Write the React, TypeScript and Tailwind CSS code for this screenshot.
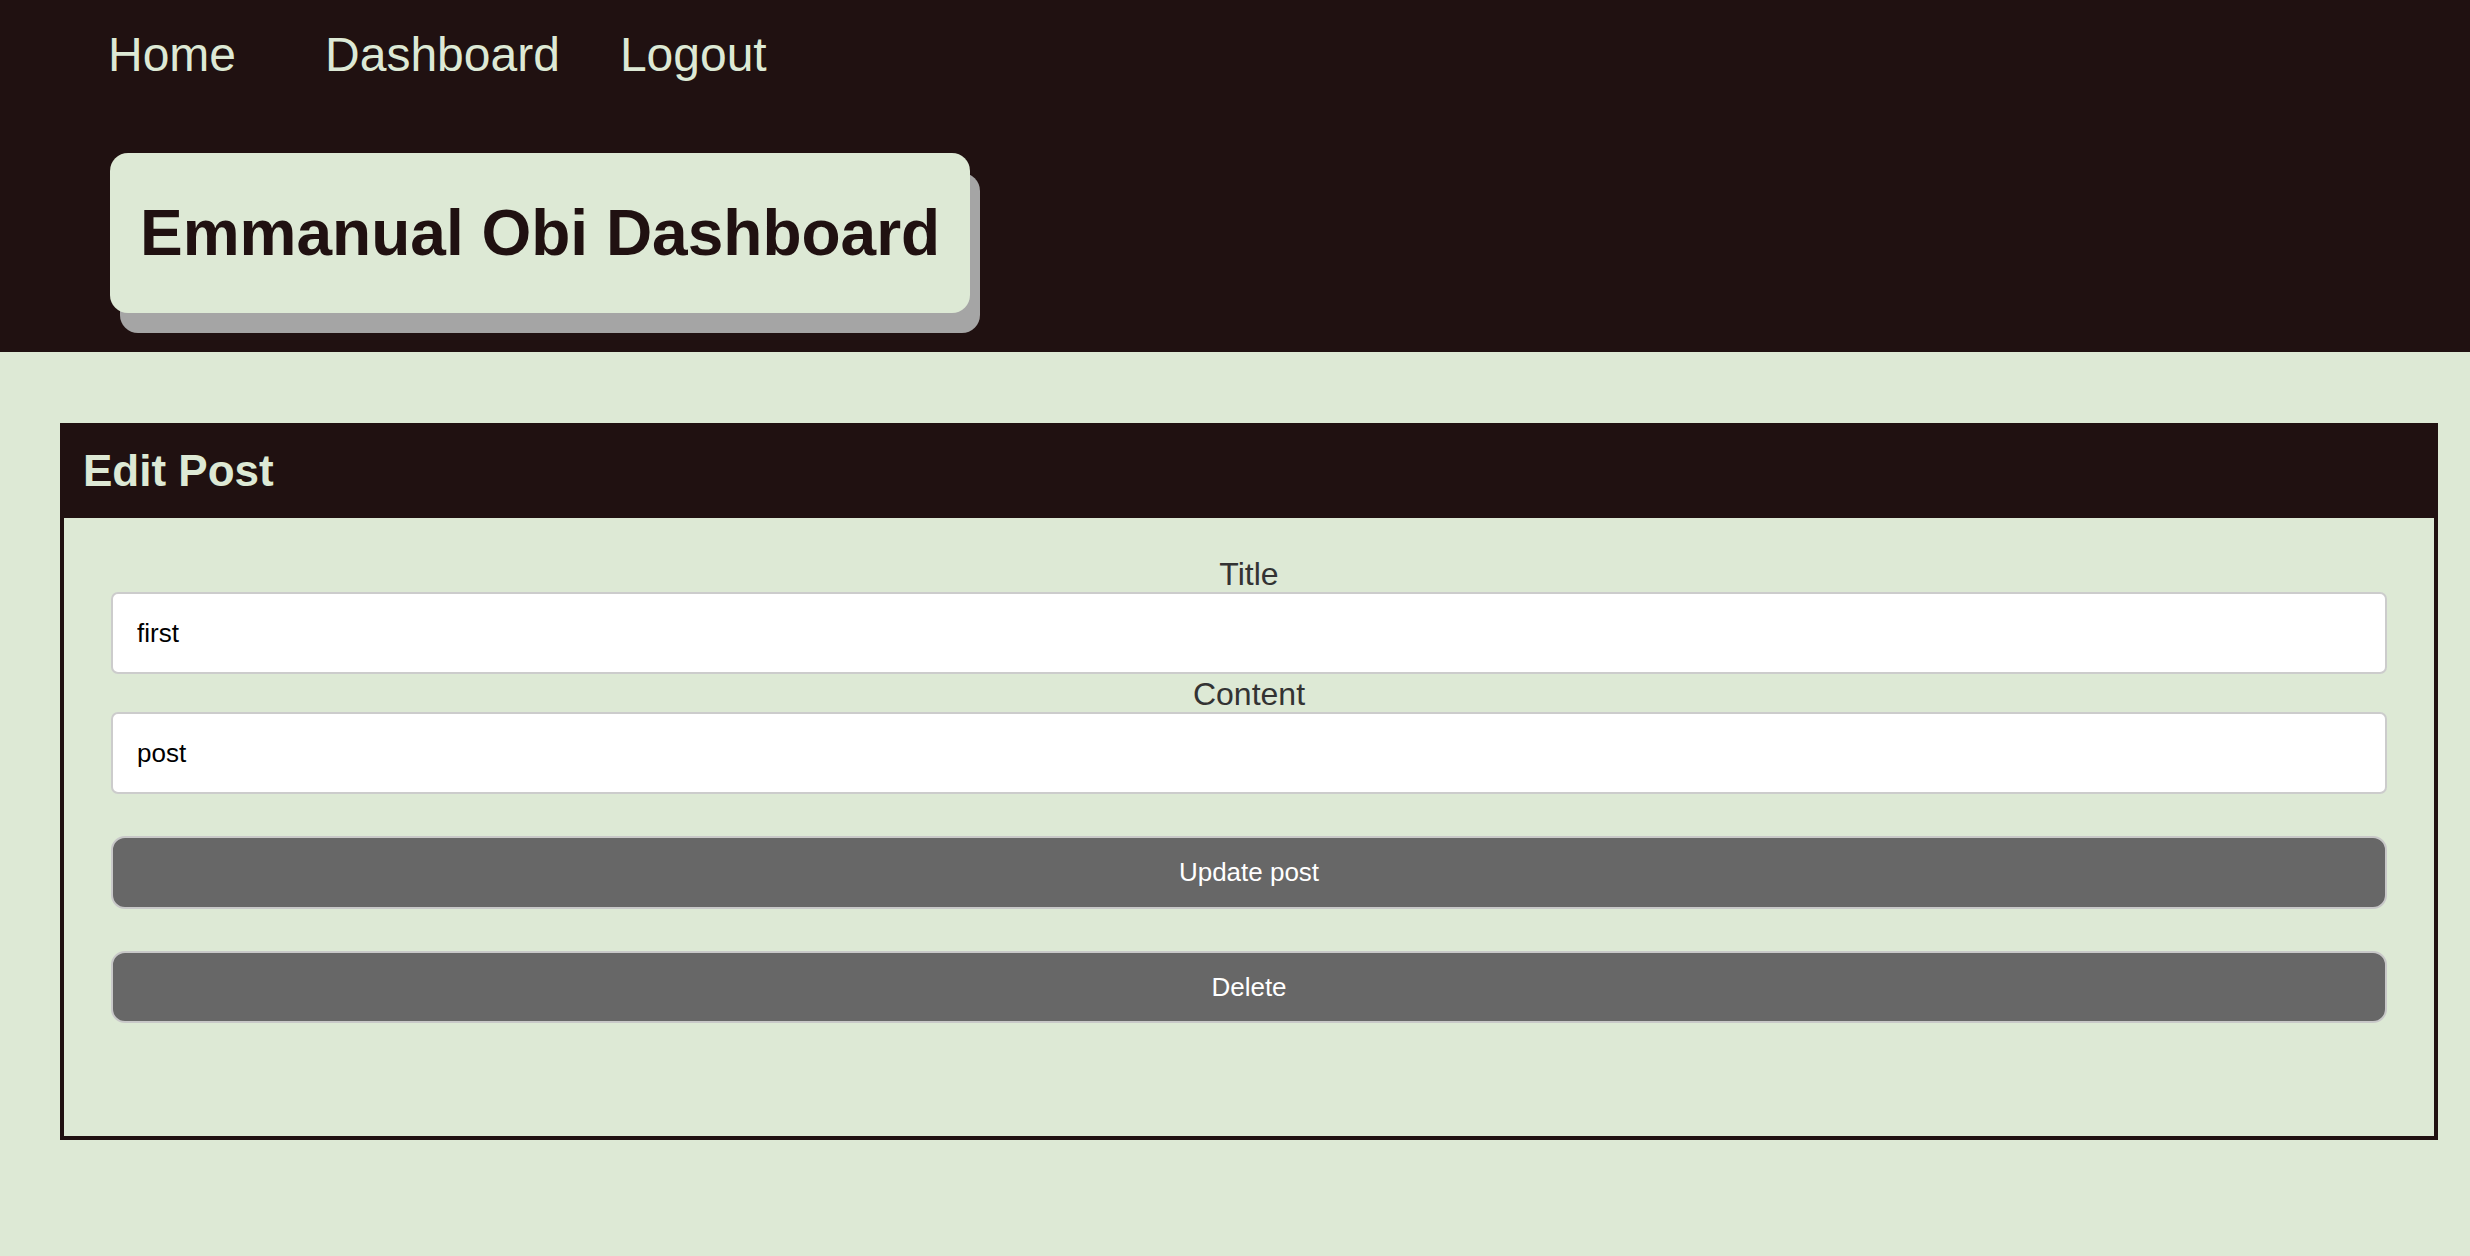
export default function App() {
  return (
    <div className="min-h-screen bg-[#dde9d5] font-['Liberation_Sans',Arial,sans-serif]">
      <header className="h-[352px] bg-[#201111] px-[108px]">
        <nav className="flex pt-[27px] text-[48px] leading-[55px] text-[#dde9d5]">
          <a href="#">Home</a>
          <a href="#" className="ml-[89px]">
            Dashboard
          </a>
          <a href="#" className="ml-[60px]">
            Logout
          </a>
        </nav>
        <div className="ml-[2px] mt-[71px] flex h-[160px] w-fit items-center rounded-[18px] bg-[#dde9d5] px-[30px] shadow-[10px_20px_0_#a5a5a5]">
          <h1 className="text-[64px] font-bold leading-none text-[#201111]">Emmanual Obi Dashboard</h1>
        </div>
      </header>

      <main className="ml-[60px] mr-[32px] pt-[71px]">
        <section>
          <div className="flex h-[95px] items-center bg-[#201111] pl-[23px]">
            <h2 className="text-[44px] font-bold text-[#dde9d5]">Edit Post</h2>
          </div>
          <form className="border-4 border-t-0 border-[#201111] px-[47px] pb-[113px] pt-[38px]">
            <label className="block text-center text-[32px] leading-[36px] text-[#333333]">Title</label>
            <input
              defaultValue="first"
              className="block h-[82px] w-full rounded-[7px] border-2 border-[#cccccc] bg-white px-[24px] text-[26px] text-black outline-none"
            />
            <label className="mt-[2px] block text-center text-[32px] leading-[36px] text-[#333333]">Content</label>
            <input
              defaultValue="post"
              className="block h-[82px] w-full rounded-[7px] border-2 border-[#cccccc] bg-white px-[24px] text-[26px] text-black outline-none"
            />
            <button
              type="button"
              className="mt-[42px] block h-[73px] w-full rounded-[14px] border-2 border-[#c8c8c8] bg-[#676767] text-[26px] text-white"
            >
              Update post
            </button>
            <button
              type="button"
              className="mt-[42px] block h-[72px] w-full rounded-[14px] border-2 border-[#c8c8c8] bg-[#676767] text-[26px] text-white"
            >
              Delete
            </button>
          </form>
        </section>
      </main>
    </div>
  )
}
